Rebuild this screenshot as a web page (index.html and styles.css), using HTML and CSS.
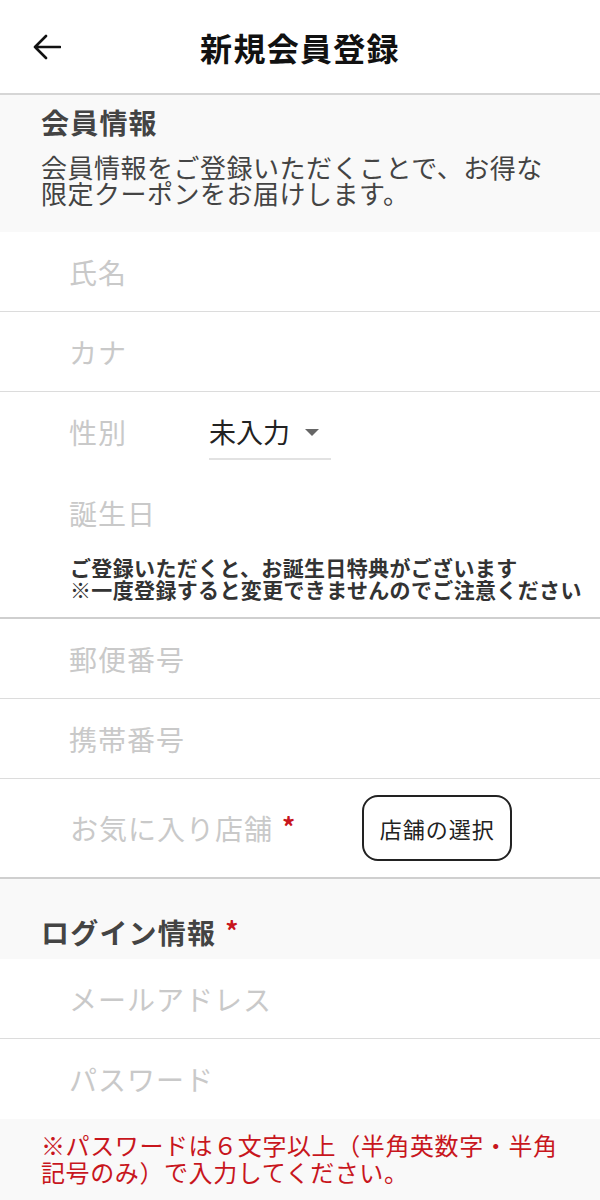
FILE: index.html
```html
<!DOCTYPE html>
<html lang="ja">
<head>
<meta charset="utf-8">
<title>新規会員登録</title>
<link rel="stylesheet" href="styles.css">
</head>
<body>
<div class="page">
  <header class="topbar">
    <div class="back">
      <svg width="28" height="26" viewBox="0 0 28 26" aria-hidden="true">
        <path d="M27 13 H2 M13 2 L2 13 L13 24" fill="none" stroke="#111" stroke-width="2.6" stroke-linecap="round" stroke-linejoin="round"/>
      </svg>
    </div>
    <h1 class="title">新規会員登録</h1>
    <div></div>
  </header>

  <section class="sect-head">
    <h2 class="sect-title">会員情報</h2>
    <p class="sect-desc"><span class="ln">会員情報をご登録いただくことで、お得な</span><span class="ln">限定クーポンをお届けします。</span></p>
  </section>

  <div class="row"><span class="label">氏名</span></div>
  <div class="row"><span class="label">カナ</span></div>
  <div class="row row-gender">
    <span class="label">性別</span>
    <div class="select"><span class="select-text">未入力</span><span class="caret"></span></div>
  </div>
  <div class="birth">
    <span class="label">誕生日</span>
    <p class="birth-note"><span class="ln">ご登録いただくと、お誕生日特典がございます</span><span class="ln">※一度登録すると変更できませんのでご注意ください</span></p>
  </div>
  <div class="row"><span class="label">郵便番号</span></div>
  <div class="row"><span class="label">携帯番号</span></div>
  <div class="row row-store">
    <span class="label">お気に入り店舗<span class="req">*</span></span>
    <button class="store-btn" type="button">店舗の選択</button>
  </div>

  <section class="sect-head login-head">
    <h2 class="sect-title">ログイン情報<span class="req">*</span></h2>
  </section>
  <div class="row"><span class="label">メールアドレス</span></div>
  <div class="row row-last"><span class="label">パスワード</span></div>
  <div class="pw-note">
    <p><span class="ln">※パスワードは６文字以上（半角英数字・半角</span><span class="ln">記号のみ）で入力してください。</span></p>
  </div>
</div>
</body>
</html>
```

FILE: styles.css
```css
* { box-sizing: border-box; }
html, body { margin: 0; padding: 0; background: #fff; }
body {
  font-family: "Noto Sans CJK JP", "Noto Sans", sans-serif;
  color: #333;
}
.page { width: 600px; }

.ln { display: block; }

.topbar {
  height: 95px;
  display: grid;
  grid-template-columns: 1fr auto 1fr;
  align-items: center;
  border-bottom: 2px solid #d6d6d6;
}
.back { padding-left: 33px; display: flex; align-items: center; }
.back svg { display: block; }
.title {
  margin: 0;
  font-size: 32px;
  line-height: 40px;
  font-weight: 700;
  letter-spacing: 1.3px;
  color: #111;
}

.sect-head {
  background: #f9f9f9;
  padding: 9px 20px 26px 41px;
}
.sect-title {
  margin: 0;
  font-size: 28px;
  line-height: 36px;
  font-weight: 700;
  letter-spacing: 1.2px;
  color: #444;
}
.sect-desc {
  margin: 14px 0 0;
  font-size: 26px;
  line-height: 26px;
  letter-spacing: 0.5px;
  color: #444;
}

.req {
  color: #c8161d;
  font-weight: 700;
  margin-left: 9px;
  font-size: 26px;
  position: relative;
  top: -3px;
}

.row {
  height: 80px;
  display: flex;
  align-items: center;
  padding-left: 69px;
  border-bottom: 1px solid #dcdcdc;
}
.label {
  font-size: 28px;
  line-height: 36px;
  letter-spacing: 1px;
  color: #c9c9c9;
}

.row-gender {
  border-bottom: none;
  align-items: flex-start;
  padding-top: 22px;
}
.select {
  margin-left: 82px;
  display: flex;
  align-items: center;
  padding-right: 12px;
  padding-bottom: 8px;
  border-bottom: 2px solid #e2e2e2;
}
.select-text {
  font-size: 27px;
  line-height: 36px;
  color: #222;
}
.caret {
  margin-left: 15px;
  width: 0;
  height: 0;
  border-left: 7px solid transparent;
  border-right: 7px solid transparent;
  border-top: 7px solid #666;
}

.birth {
  padding: 23px 0 17px 69px;
  border-bottom: 2px solid #cfcfcf;
}
.birth .label { display: block; }
.birth-note {
  margin: 25px 0 0 1px;
  font-size: 21px;
  line-height: 22px;
  font-weight: 700;
  letter-spacing: 0.35px;
  color: #333;
}

.row-store {
  height: 100px;
  border-bottom: 2px solid #cfcfcf;
  padding-left: 70px;
}
.store-btn {
  margin-left: 66px;
  height: 66px;
  width: 150px;
  padding: 0;
  background: #fff;
  border: 2px solid #222;
  border-radius: 16px;
  font-family: "Noto Sans CJK JP", "Noto Sans", sans-serif;
  font-size: 22px;
  letter-spacing: 1px;
  color: #222;
}

.login-head {
  padding-top: 35px;
  padding-bottom: 8px;
}

.row-last { border-bottom: none; }

.pw-note {
  background: #f9f9f9;
  padding: 12px 20px 30px 41px;
}
.pw-note p {
  margin: 0;
  font-size: 24px;
  line-height: 27px;
  letter-spacing: 0.6px;
  color: #c8161d;
}
```
